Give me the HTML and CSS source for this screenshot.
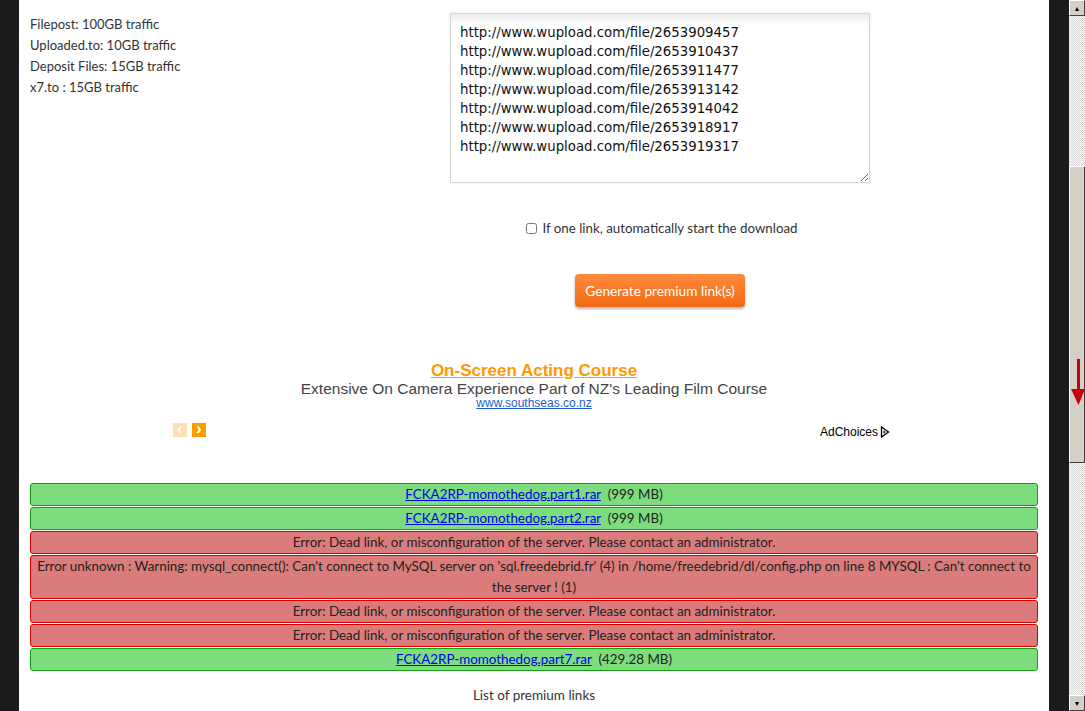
FILE: index.html
```html
<!DOCTYPE html>
<html lang="en">
<head>
    <meta charset="UTF-8">
    <title>Premium links</title>
    <link rel="stylesheet" href="styles.css">
</head>
<body>
    <div class="ventana">
        <div class="margen"></div>
        <div class="pagina">
            <div class="arriba">
                <div class="trafico">
                    <p>Filepost: 100GB traffic</p>
                    <p>Uploaded.to: 10GB traffic</p>
                    <p>Deposit Files: 15GB traffic</p>
                    <p>x7.to : 15GB traffic</p>
                </div>
                <div class="formulario">
                    <textarea class="enlaces" spellcheck="false">http://www.wupload.com/file/2653909457
http://www.wupload.com/file/2653910437
http://www.wupload.com/file/2653911477
http://www.wupload.com/file/2653913142
http://www.wupload.com/file/2653914042
http://www.wupload.com/file/2653918917
http://www.wupload.com/file/2653919317</textarea>
                    <label class="opcion"><input type="checkbox"> If one link, automatically start the download</label>
                    <button class="generar">Generate premium link(s)</button>
                </div>
            </div>

            <div class="anuncio">
                <a class="titulo" href="#">On-Screen Acting Course</a>
                <div class="texto">Extensive On Camera Experience Part of NZ's Leading Film Course</div>
                <a class="url" href="#">www.southseas.co.nz</a>
                <div class="pie">
                    <div class="flechas">
                        <span class="flecha apagada">&#8249;</span>
                        <span class="flecha">&#8250;</span>
                    </div>
                    <div class="adchoices">AdChoices
                        <svg width="10" height="12" viewBox="0 0 10 12"><path d="M1.5 1 L8.5 6 L1.5 11 Z" fill="none" stroke="#000" stroke-width="1.3"/><path d="M3.5 4.5 L6 6 L3.5 7.5 Z" fill="#000"/></svg>
                    </div>
                </div>
            </div>

            <div class="resultados">
                <div class="fila ok"><a href="#">FCKA2RP-momothedog.part1.rar</a>&nbsp; (999 MB)</div>
                <div class="fila ok"><a href="#">FCKA2RP-momothedog.part2.rar</a>&nbsp; (999 MB)</div>
                <div class="fila error">Error: Dead link, or misconfiguration of the server. Please contact an administrator.</div>
                <div class="fila error">Error unknown : Warning: mysql_connect(): Can't connect to MySQL server on 'sql.freedebrid.fr' (4) in /home/freedebrid/dl/config.php on line 8 MYSQL : Can't connect to the server ! (1)</div>
                <div class="fila error">Error: Dead link, or misconfiguration of the server. Please contact an administrator.</div>
                <div class="fila error">Error: Dead link, or misconfiguration of the server. Please contact an administrator.</div>
                <div class="fila ok"><a href="#">FCKA2RP-momothedog.part7.rar</a>&nbsp; (429.28 MB)</div>
            </div>

            <p class="lista">List of premium links</p>
        </div>
        <div class="margen derecho"></div>
        <div class="barra">
            <div class="boton-barra">&#9650;</div>
            <div class="pista"></div>
            <div class="cursor">
                <svg class="flecha-roja" width="16" height="48" viewBox="0 0 16 48"><path d="M7 0 H10 V30 H15 L8.5 46 L1 30 H7 Z" fill="#c8000a"/></svg>
            </div>
            <div class="pista larga"></div>
            <div class="boton-barra">&#9660;</div>
        </div>
    </div>
</body>
</html>
```

FILE: styles.css
```css
html, body {
    margin: 0;
    padding: 0;
    height: 100%;
    overflow: hidden;
}
body {
    background-color: #1b1b1b;
    font-family: 'Lato', 'Liberation Sans', sans-serif;
    font-size: 13.5px;
    color: #222;
}
.ventana {
    display: flex;
    height: 711px;
}
.margen {
    width: 19px;
    background: #1b1b1b;
    flex-shrink: 0;
}
.margen.derecho {
    width: 20px;
}
.pagina {
    width: 1030px;
    flex-shrink: 0;
    background: white;
    padding: 13px 11px 0 11px;
    box-sizing: border-box;
}
.arriba {
    display: flex;
}
.trafico {
    width: 420px;
    padding-top: 1px;
    font-size: 13px;
}
.trafico p {
    margin: 0;
    line-height: 21px;
    color: #333;
}
.formulario {
    width: 420px;
    display: flex;
    flex-direction: column;
    align-items: center;
}
.enlaces {
    width: 420px;
    height: 170px;
    box-sizing: border-box;
    border: 1px solid #d6d6d6;
    box-shadow: inset 0 10px 12px -8px rgba(0, 0, 0, 0.12), 0 0 3px rgba(0, 0, 0, 0.08);
    padding: 9px 9px;
    font-family: 'DejaVu Sans', Verdana, sans-serif;
    font-size: 13.3px;
    line-height: 19px;
    color: #111;
    resize: both;
    margin: 0;
}
.opcion {
    margin-top: 35px;
    margin-left: 4px;
    line-height: 21px;
    color: #333;
    display: flex;
    align-items: center;
    font-size: 13.3px;
}
.opcion input {
    margin: 0 5px 0 0;
    width: 11px;
    height: 11px;
}
.generar {
    margin-top: 35px;
    width: 170px;
    height: 33px;
    border: none;
    border-radius: 4px;
    background: linear-gradient(#ff8a3c, #f26914);
    color: white;
    font-family: 'Lato', 'Liberation Sans', sans-serif;
    font-size: 13.7px;
    box-shadow: 0 2px 3px rgba(0, 0, 0, 0.3);
    cursor: pointer;
}
.anuncio {
    width: 728px;
    height: 92px;
    margin: 47px auto 0 auto;
    text-align: center;
    font-family: 'Liberation Sans Narrow', 'Liberation Sans', sans-serif;
}
.anuncio .titulo {
    display: block;
    padding-top: 7px;
    font-size: 17px;
    font-weight: bold;
    color: #ff9a00;
    line-height: 19px;
}
.anuncio .texto {
    font-size: 15.5px;
    color: #444;
    line-height: 17px;
}
.anuncio .url {
    display: block;
    font-size: 12px;
    color: #1f5bd0;
    line-height: 12px;
}
.pie {
    display: flex;
    justify-content: space-between;
    align-items: center;
    padding: 12px 8px 0 3px;
}
.flechas {
    display: flex;
    gap: 5px;
}
.flecha {
    width: 14px;
    height: 14px;
    background: #ff9e00;
    color: white;
    font-family: 'Liberation Sans', sans-serif;
    font-weight: bold;
    font-size: 16px;
    line-height: 12px;
}
.flecha.apagada {
    background: #ffe0b3;
}
.adchoices {
    font-family: 'Liberation Sans Narrow', 'Liberation Sans', sans-serif;
    font-size: 12px;
    color: #000;
    display: flex;
    align-items: center;
    gap: 2px;
    margin-top: 4px;
}
.resultados {
    margin-top: 37px;
}
.fila {
    border: 1px solid;
    border-radius: 3px;
    line-height: 21px;
    text-align: center;
    margin-bottom: 1px;
    padding: 0;
    font-size: 13.4px;
}
.fila.ok {
    background: #7ddc7b;
    border-color: #12a012;
}
.fila.error {
    background: #dc7b7b;
    border-color: #d90000;
}
.fila a {
    color: #0000ee;
}
.lista {
    text-align: center;
    margin: 14px 0 0 0;
    line-height: 21px;
    color: #333;
}
.barra {
    width: 16px;
    display: flex;
    flex-direction: column;
    background-color: #f4f4f4;
    background-image: repeating-conic-gradient(#d8d8d8 0 25%, #fafafa 0 50%);
    background-size: 2px 2px;
}
.boton-barra {
    height: 16px;
    background: #d4d0c8;
    border: 1px solid;
    border-color: #fff #404040 #404040 #fff;
    box-sizing: border-box;
    font-size: 7px;
    line-height: 14px;
    text-align: center;
    color: #000;
}
.pista {
    height: 150px;
}
.pista.larga {
    flex: 1;
}
.cursor {
    height: 297px;
    background: #d4d0c8;
    border: 1px solid;
    border-color: #fff #404040 #404040 #fff;
    box-sizing: border-box;
    position: relative;
}
.flecha-roja {
    position: absolute;
    left: 0;
    top: 192px;
}
```
